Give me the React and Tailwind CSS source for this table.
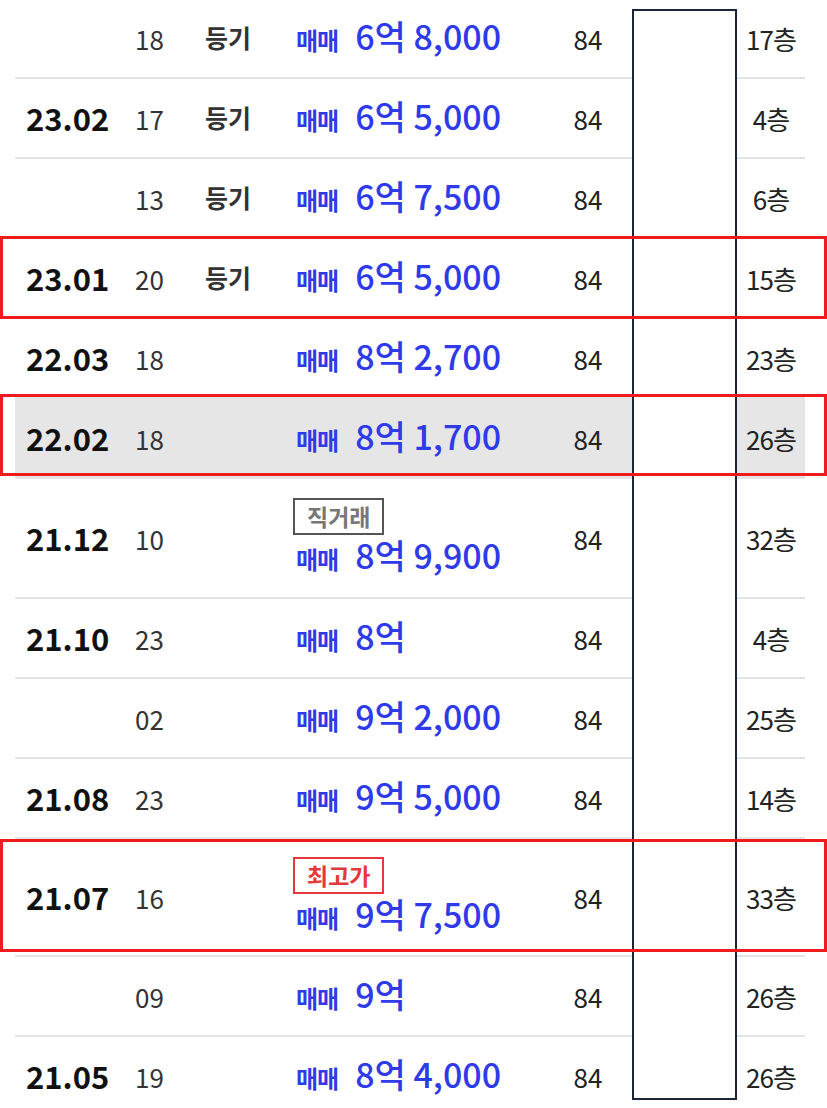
import React from "react";

const rows = [
  { date: "", day: "18", reg: true, price: "6억 8,000", floor: "17" },
  { date: "23.02", day: "17", reg: true, price: "6억 5,000", floor: "4" },
  { date: "", day: "13", reg: true, price: "6억 7,500", floor: "6" },
  { date: "23.01", day: "20", reg: true, price: "6억 5,000", floor: "15" },
  { date: "22.03", day: "18", price: "8억 2,700", floor: "23" },
  { date: "22.02", day: "18", price: "8억 1,700", floor: "26", gray: true },
  { date: "21.12", day: "10", price: "8억 9,900", floor: "32", tag: "direct", tall: "h-[120px]" },
  { date: "21.10", day: "23", price: "8억", floor: "4" },
  { date: "", day: "02", price: "9억 2,000", floor: "25" },
  { date: "21.08", day: "23", price: "9억 5,000", floor: "14" },
  { date: "21.07", day: "16", price: "9억 7,500", floor: "33", tag: "top", tall: "h-[118px]" },
  { date: "", day: "09", price: "9억", floor: "26" },
  { date: "21.05", day: "19", price: "8억 4,000", floor: "26" },
];

const Tag = ({ type }) => {
  if (type === "top") {
    return (
      <div className="border-2 border-[#e23a3a] px-[12px] text-[23px] leading-[33px] font-bold text-[#e23a3a]">
        최고가
      </div>
    );
  }
  return (
    <div className="border-2 border-[#555] px-[12px] text-[23px] leading-[33px] font-bold text-[#777]">
      직거래
    </div>
  );
};

const Row = ({ r }) => (
  <div
    className={`flex items-center border-b-2 border-[#e4e4e4] ${r.tall || "h-[80px]"} ${
      r.gray ? "bg-[#e6e6e6]" : ""
    }`}
  >
    <div className="w-[120px] pl-[11px] text-[31px] font-bold text-[#111]">{r.date}</div>
    <div className="w-[70px] text-[26px] text-[#333]">{r.day}</div>
    <div className="w-[88px] text-[25px] font-bold text-[#333]">{r.reg && "등기"}</div>
    <div className="w-[267px] flex flex-col items-start">
      {r.tag && <Tag type={r.tag} />}
      <div className="flex items-baseline pl-[3px] text-[#2f3be8] leading-[40px]">
        <span className="text-[24px] font-bold tracking-[-1px]">매매</span>
        <span className="ml-[17px] text-[34px] font-medium">{r.price}</span>
      </div>
    </div>
    <div className="w-[56px] text-center text-[26px] text-[#222]">84</div>
    <div className="w-[121px]" />
    <div className="w-[68px] text-center text-[26px] tracking-[-1px] text-[#222]">
      {r.floor}층
    </div>
  </div>
);

export default function App() {
  return (
    <div className="relative w-[827px] h-[1108px] overflow-hidden bg-white font-['Noto_Sans_CJK_KR',sans-serif]">
      {/* 거래 목록 */}
      <div className="ml-[15px] w-[790px] -mt-[1px]">
        {rows.map((r, i) => (
          <Row key={i} r={r} />
        ))}
      </div>

      {/* 가림 박스 */}
      <div className="absolute left-[632px] top-[9px] w-[105px] h-[1091px] border-2 border-[#1c2438] bg-white" />

      {/* 강조 표시 */}
      <div className="absolute left-0 top-[236px] w-[827px] h-[83px] border-[3px] border-[#ee1c1c]" />
      <div className="absolute left-0 top-[394px] w-[827px] h-[82px] border-[3px] border-[#ee1c1c]" />
      <div className="absolute left-0 top-[839px] w-[827px] h-[113px] border-[3px] border-[#ee1c1c]" />
    </div>
  );
}
